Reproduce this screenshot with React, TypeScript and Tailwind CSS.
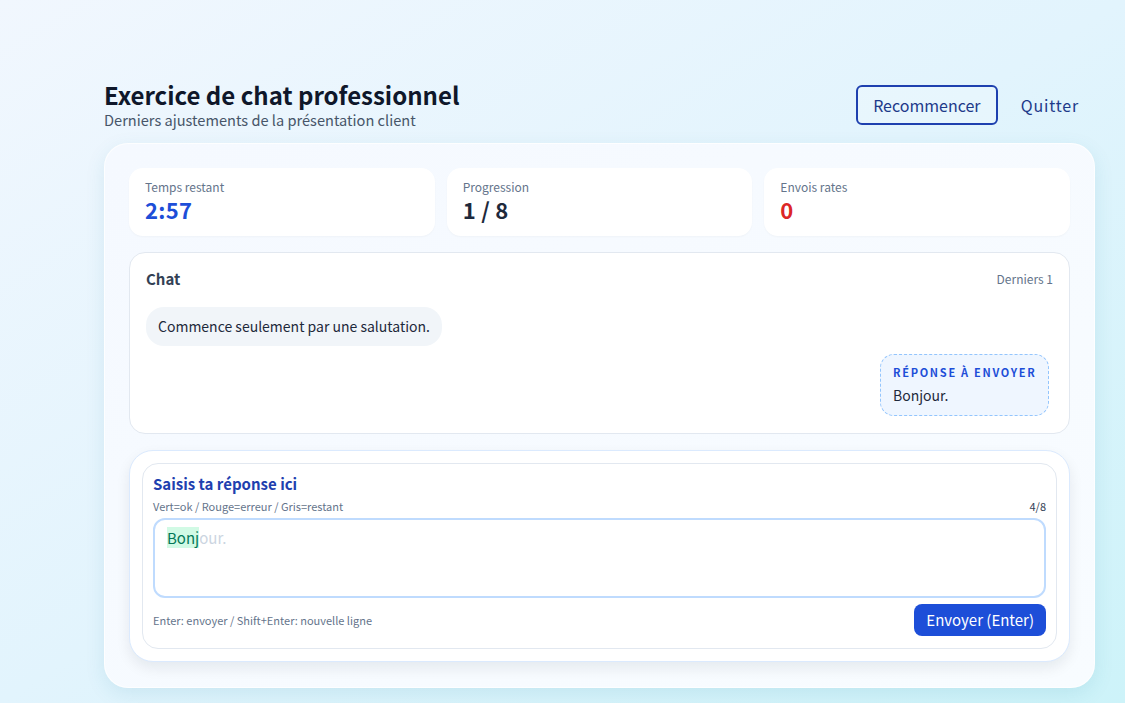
import React from 'react'

type StatProps = {
  label: string;
  value: string;
  tone: string;
}

function Stat({ label, value, tone }: StatProps) {
  return (
    <div className='bg-white rounded-[14px] px-4 pt-[11px] pb-[12px] h-[68px] shadow-[0_1px_2px_rgba(15,23,42,0.03)]'>
      <p className='text-[12px] leading-[16px] text-[#64748b]'>{label}</p>
      <p className={`text-[22px] leading-[28px] font-bold tracking-[0.3px] ${tone}`}>{value}</p>
    </div>
  )
}

export default function App() {
  return (
    <div
      className='min-h-[703px] w-full bg-gradient-to-br from-[#f1f7fe] via-[#e2f4fd] to-[#cdf3f9] text-[#0f172a]'
      style={{ fontFamily: '"Noto Sans CJK JP", "Noto Sans", sans-serif' }}
    >
      <div className='ml-[104px] w-[991px] pt-[81px]'>
        {/* header */}
        <div className='flex items-start justify-between'>
          <div>
            <h1 className='text-[24px] leading-[28px] font-bold text-[#0f172a]'>Exercice de chat professionnel</h1>
            <p className='mt-[1px] text-[14.6px] leading-[20px] text-[#475569]'>Derniers ajustements de la présentation client</p>
          </div>
          <div className='flex items-center gap-[23px] mt-[4px] mr-[16px]'>
            <button className='h-[40px] w-[142px] rounded-[6px] border-2 border-[#1e40af] text-[16px] text-[#1e3a8a] bg-white/20'>Recommencer</button>
            <button className='text-[16px] text-[#1e3a8a] tracking-[0.8px]'>Quitter</button>
          </div>
        </div>

        {/* main card */}
        <div className='mt-[13px] rounded-[24px] border border-white/80 bg-gradient-to-br from-[#f5f9ff] to-[#f8fcff] p-6 pb-[25px] shadow-[0_6px_20px_rgba(14,116,144,0.10)]'>
          <div className='grid grid-cols-3 gap-3'>
            <Stat label='Temps restant' value='2:57' tone='text-[#1d4ed8]' />
            <Stat label='Progression' value='1 / 8' tone='text-[#1e293b]' />
            <Stat label='Envois rates' value='0' tone='text-[#dc2626]' />
          </div>

          {/* chat */}
          <div className='mt-4 h-[182px] rounded-[16px] border border-[#e2e8f0] bg-white px-4 pt-[16px]'>
            <div className='flex items-center justify-between'>
              <span className='text-[15px] font-semibold text-[#334155] leading-[20px]'>Chat</span>
              <span className='text-[12px] text-[#64748b] leading-[20px]'>Derniers 1</span>
            </div>
            <div className='mt-[18px] flex'>
              <div className='rounded-[18px] bg-[#f1f5f9] px-3 h-[39px] flex items-center text-[14px] text-[#1e293b]'>
                Commence seulement par une salutation.
              </div>
            </div>
            <div className='mt-2 flex justify-end pr-[4px]'>
              <div className='rounded-[14px] border border-dashed border-[#93c5fd] bg-[#eff6ff] px-3 pt-[9px] pb-[10px] w-[169px]'>
                <p className='whitespace-nowrap text-[11px] leading-[16px] font-bold tracking-[1.7px] text-[#1d4ed8]'>RÉPONSE À ENVOYER</p>
                <p className='mt-[5px] text-[14px] leading-[20px] text-[#1e293b]'>Bonjour.</p>
              </div>
            </div>
          </div>

          {/* input */}
          <div className='mt-4 rounded-[24px] border border-[#dbeafe] bg-white p-3 shadow-[0_6px_14px_rgba(15,23,42,0.08)]'>
            <div className='rounded-[16px] border border-[#e2e8f0] px-[10px] pt-[10px] pb-[12px]'>
              <p className='text-[15px] leading-[20px] font-bold text-[#1e40af]'>Saisis ta réponse ici</p>
              <div className='mt-[4px] flex items-center justify-between text-[11px] leading-[16px]'>
                <span className='text-[#64748b]'>Vert=ok / Rouge=erreur / Gris=restant</span>
                <span className='text-[#334155]'>4/8</span>
              </div>
              <div className='mt-[4px] h-[80px] rounded-[12px] border-2 border-[#bfdbfe] px-3 pt-[7px] text-[15px] leading-[22px]'>
                <span className='bg-[#d1fae5] text-[#047857]'>Bonj</span>
                <span className='text-[#cbd5e1]'>our.</span>
              </div>
              <div className='mt-[6px] flex items-center justify-between'>
                <span className='text-[11px] text-[#64748b]'>Enter: envoyer / Shift+Enter: nouvelle ligne</span>
                <button className='h-[32px] rounded-[8px] bg-[#1d4ed8] px-3 text-[15px] text-white'>Envoyer (Enter)</button>
              </div>
            </div>
          </div>
        </div>
      </div>
    </div>
  )
}
